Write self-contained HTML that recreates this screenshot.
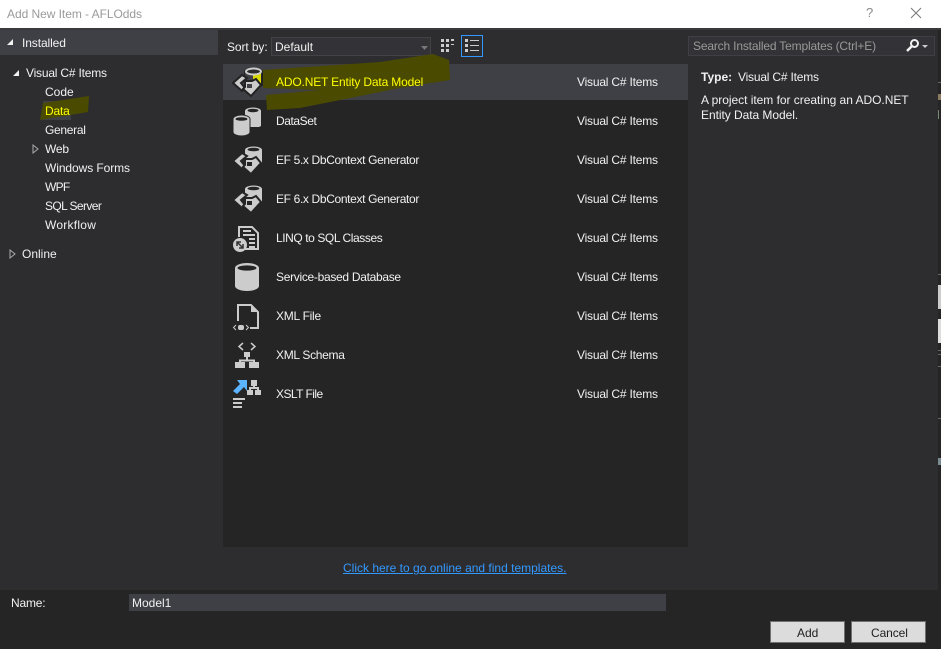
<!DOCTYPE html>
<html><head><meta charset="utf-8"><style>
html,body{margin:0;padding:0;background:#2d2d30}
#r{position:relative;width:941px;height:649px;overflow:hidden;background:#2d2d30;font-family:"Liberation Sans",sans-serif;font-size:12px;color:#f1f1f1}
#r div,#r span.t{position:absolute;white-space:nowrap}
.t{line-height:16px}
.v{letter-spacing:-.2px}
svg{position:absolute;overflow:visible}
</style></head><body><div id="r">
<div style="left:0;top:0;width:941px;height:29px;background:#fff"></div>
<div style="left:0;top:28px;width:941px;height:2px;background:#3a3a3d"></div>
<span class="t" style="left:7px;top:6px;color:#9a9a9a;letter-spacing:-.05px">Add New Item - AFLOdds</span>
<span class="t" style="left:866px;top:5px;color:#8a8a8a;font-size:13px">?</span>
<svg style="left:910px;top:7px" width="12" height="12"><path d="M1 1L11 11M11 1L1 11" stroke="#777" stroke-width="1" fill="none"/></svg>

<div style="left:0;top:30px;width:218px;height:25px;background:#3f3f46"></div>
<svg style="left:6px;top:38px" width="8" height="8"><path d="M7 1V7H1Z" fill="#f1f1f1"/></svg>
<span class="t" style="left:22px;top:35px;letter-spacing:-.1px">Installed</span>
<svg style="left:12px;top:69px" width="8" height="8"><path d="M7 1V7H1Z" fill="#f1f1f1"/></svg>
<span class="t v" style="left:26px;top:65px">Visual C# Items</span>
<span class="t" style="left:45px;top:84px">Code</span>
<div style="left:43px;top:101px;width:28px;height:19px;background:#3f3f46"></div>
<svg style="left:0;top:0" width="100" height="130"><path d="M43 103L89 96L88 112L70 115L40 120Z" fill="#4a4a00"/></svg>
<span class="t" style="left:45px;top:103px;color:#ffff00;letter-spacing:-.2px">Data</span>
<span class="t" style="left:45px;top:122px;letter-spacing:-.3px">General</span>
<svg style="left:32px;top:144px" width="7" height="10"><path d="M1 1V9L6 5Z" fill="none" stroke="#aaa"/></svg>
<span class="t" style="left:45px;top:141px;letter-spacing:-.2px">Web</span>
<span class="t" style="left:45px;top:160px;letter-spacing:-.08px">Windows Forms</span>
<span class="t" style="left:45px;top:179px;letter-spacing:-.7px">WPF</span>
<span class="t" style="left:45px;top:198px;letter-spacing:-.6px">SQL Server</span>
<span class="t" style="left:45px;top:217px;letter-spacing:.25px">Workflow</span>
<svg style="left:9px;top:249px" width="7" height="10"><path d="M1 1V9L6 5Z" fill="none" stroke="#aaa"/></svg>
<span class="t" style="left:22px;top:246px">Online</span>

<span class="t" style="left:227px;top:39px;letter-spacing:-.1px">Sort by:</span>
<div style="left:271px;top:37px;width:158px;height:17px;background:#333337;border:1px solid #434346"></div>
<span class="t" style="left:275px;top:39px">Default</span>
<svg style="left:421px;top:46px" width="8" height="4"><path d="M0 0H7L3.5 4Z" fill="#777"/></svg>
<svg style="left:440px;top:38px" width="15" height="16" fill="#ccc"><rect x="1" y="1" width="3" height="3"/><rect x="6" y="1" width="3" height="3"/><rect x="11" y="1" width="3" height="2"/><rect x="1" y="6" width="3" height="3"/><rect x="6" y="6" width="3" height="3"/><rect x="11" y="6" width="3" height="1"/><rect x="1" y="11" width="3" height="3"/><rect x="6" y="11" width="3" height="3"/></svg>
<div style="left:461px;top:35px;width:20px;height:20px;border:1px solid #3399ff"></div>
<svg style="left:465px;top:39px" width="15" height="14" fill="#ccc"><rect x="0" y="0" width="3" height="3"/><rect x="5" y="1" width="9" height="1"/><rect x="0" y="5" width="3" height="3"/><rect x="5" y="6" width="9" height="1"/><rect x="0" y="10" width="3" height="3"/><rect x="5" y="11" width="9" height="1"/></svg>

<div style="left:223px;top:64px;width:465px;height:483px;background:#252526"></div>
<div style="left:223px;top:64px;width:465px;height:36px;background:#3f3f46"></div>
<svg style="left:0;top:0" width="460" height="120"><path d="M263 70L380 62L433 54L449 60L450 80L400 88L340 100L300 108L267 110L266 95L320 90L263 88Z" fill="#4a4a00"/></svg>

<svg style="left:232px;top:66px" width="32" height="32">
<path d="M13 6A8.500 3.500 0 0 1 30 6V19L24 21H13Z" fill="#d8d800" stroke="#222" stroke-width="2"/>
<path d="M13 6H21V20H13Z" fill="#3f3f46"/>
<ellipse cx="21.500" cy="5.500" rx="7.500" ry="3" fill="#2a2a2a" stroke="#ccc" stroke-width="2"/>
<path d="M10 9L1 17L10 25L13 22L9 17L15 12Z" fill="#ccc" stroke="#222" stroke-width="2"/>
<path d="M12 15H20L24 13L29 19L19 30L11 23L13 21V15Z" fill="#ccc" stroke="#222" stroke-width="2"/>
<path d="M15 18H20V22H15Z" fill="#3f3f46"/>
</svg>
<span class="t" style="left:276px;top:74px;color:#ffff00;letter-spacing:-.16px">ADO.NET Entity Data Model</span>
<span class="t v" style="left:577px;top:74px">Visual C# Items</span>

<svg style="left:232px;top:105px" width="32" height="32" fill="#ccc"><path d="M13 6A8 3.500 0 0 1 29 6V21L27 22H13Z"/><ellipse cx="21" cy="5.500" rx="5.500" ry="1.700" fill="#252526"/><path d="M1 14A8.500 4 0 0 1 18 14V27A8.500 4 0 0 1 1 27Z" stroke="#252526"/><ellipse cx="9.500" cy="14" rx="6" ry="1.800" fill="#252526"/></svg>
<span class="t" style="left:276px;top:113px;letter-spacing:-.43px">DataSet</span>
<span class="t v" style="left:577px;top:113px">Visual C# Items</span>

<svg style="left:232px;top:144px" width="32" height="32">
<path d="M13 6A8.500 3.500 0 0 1 30 6V19L24 21H13Z" fill="#ccc"/>
<ellipse cx="21.500" cy="5.500" rx="6" ry="1.800" fill="#252526"/>
<path d="M10 9L1 17L10 25L13 22L9 17L15 12Z" fill="#ccc" stroke="#252526" stroke-width="2"/>
<path d="M12 15H20L24 13L29 19L19 30L11 23L13 21V15Z" fill="#ccc" stroke="#252526" stroke-width="2"/>
<path d="M15 18H20V22H15Z" fill="#252526"/>
</svg>
<span class="t" style="left:276px;top:152px;letter-spacing:-.35px">EF 5.x DbContext Generator</span>
<span class="t v" style="left:577px;top:152px">Visual C# Items</span>

<svg style="left:232px;top:183px" width="32" height="32">
<path d="M13 6A8.500 3.500 0 0 1 30 6V19L24 21H13Z" fill="#ccc"/>
<ellipse cx="21.500" cy="5.500" rx="6" ry="1.800" fill="#252526"/>
<path d="M10 9L1 17L10 25L13 22L9 17L15 12Z" fill="#ccc" stroke="#252526" stroke-width="2"/>
<path d="M12 15H20L24 13L29 19L19 30L11 23L13 21V15Z" fill="#ccc" stroke="#252526" stroke-width="2"/>
<path d="M15 18H20V22H15Z" fill="#252526"/>
</svg>
<span class="t" style="left:276px;top:191px;letter-spacing:-.35px">EF 6.x DbContext Generator</span>
<span class="t v" style="left:577px;top:191px">Visual C# Items</span>

<svg style="left:232px;top:222px" width="32" height="32">
<path d="M7 15V5H20L26 11V27H13" fill="none" stroke="#ccc" stroke-width="2"/>
<path d="M11 9H19M11 13H23M17 17H23M17 21H23M17 25H23" stroke="#ccc" stroke-width="2"/>
<circle cx="8" cy="23" r="7" fill="#ccc"/>
<path d="M5 20L11 26M5 24V20H9M11 22V26H7" fill="none" stroke="#333" stroke-width="1.500"/>
</svg>
<span class="t" style="left:276px;top:230px;letter-spacing:-.42px">LINQ to SQL Classes</span>
<span class="t v" style="left:577px;top:230px">Visual C# Items</span>

<svg style="left:232px;top:261px" width="32" height="32"><path d="M3 7A12 5 0 0 1 27 7V25A12 5 0 0 1 3 25Z" fill="#ccc"/><ellipse cx="15" cy="7" rx="9.500" ry="2.600" fill="#252526"/></svg>
<span class="t" style="left:276px;top:269px;letter-spacing:-.3px">Service-based Database</span>
<span class="t v" style="left:577px;top:269px">Visual C# Items</span>

<svg style="left:232px;top:303px" width="32" height="30"><path d="M6 18V2H19L26 9V25H18" fill="none" stroke="#ccc" stroke-width="2"/><path d="M19 2V9H26Z" fill="#ccc"/><path d="M4 22L1.500 24.500L4 27M14 22L16.500 24.500L14 27" fill="none" stroke="#ccc"/><rect x="6" y="22" width="6" height="5" rx="2" fill="#ccc"/></svg>
<span class="t" style="left:276px;top:308px;letter-spacing:-.25px">XML File</span>
<span class="t v" style="left:577px;top:308px">Visual C# Items</span>

<svg style="left:232px;top:340px" width="32" height="30" fill="#ccc"><path d="M11 3L7 6.500L11 10M19 3L23 6.500L19 10" fill="none" stroke="#ccc" stroke-width="1.500"/><rect x="12" y="12" width="6" height="5"/><path d="M15 16V21M8 24V20.500H22V24" fill="none" stroke="#ccc" stroke-width="2"/><rect x="3" y="22" width="10" height="6"/><rect x="17" y="22" width="10" height="6"/></svg>
<span class="t" style="left:276px;top:347px;letter-spacing:-.3px">XML Schema</span>
<span class="t v" style="left:577px;top:347px">Visual C# Items</span>

<svg style="left:232px;top:378px" width="34" height="32"><path d="M5 2H15V13L12 9L5 16L1 13L8 6Z" fill="#5cb3ff"/><rect x="19" y="2" width="6" height="6" fill="#ccc"/><path d="M22 7V10M18 14V10H26V14" fill="none" stroke="#ccc" stroke-width="2"/><rect x="15" y="12" width="6" height="5" fill="#ccc"/><rect x="23" y="12" width="6" height="5" fill="#ccc"/><path d="M1 21H13M1 25H10M1 29H10" stroke="#ccc" stroke-width="2"/></svg>
<span class="t" style="left:276px;top:386px;letter-spacing:-.55px">XSLT File</span>
<span class="t v" style="left:577px;top:386px">Visual C# Items</span>

<div style="left:688px;top:36px;width:245px;height:18px;background:#333337;border:1px solid #3f3f46"></div>
<span class="t" style="left:693px;top:38px;color:#999;letter-spacing:-.17px">Search Installed Templates (Ctrl+E)</span>
<svg style="left:906px;top:38px" width="22" height="15"><circle cx="8.500" cy="5.500" r="3.500" fill="none" stroke="#f1f1f1" stroke-width="2"/><path d="M6 8L1 13" stroke="#f1f1f1" stroke-width="2.500"/><path d="M16 7H22L19 10Z" fill="#ccc"/></svg>
<span class="t" style="left:701px;top:69px"><b>Type:</b></span>
<span class="t v" style="left:738px;top:69px">Visual C# Items</span>
<span class="t" style="left:701px;top:92px;letter-spacing:-.03px">A project item for creating an ADO.NET</span>
<span class="t" style="left:701px;top:107px;letter-spacing:-.05px">Entity Data Model.</span>

<span class="t" style="left:343px;top:560px;color:#3399ff;text-decoration:underline">Click here to go online and find templates.</span>

<div style="left:0;top:590px;width:938px;height:59px;background:#252526"></div>
<span class="t" style="left:11px;top:595px;letter-spacing:-.2px">Name:</span>
<div style="left:129px;top:594px;width:537px;height:17px;background:#3f3f46"></div>
<span class="t" style="left:132px;top:595px">Model1</span>
<div style="left:770px;top:621px;width:73px;height:20px;background:#dcdcdc;border:1px solid #707070"></div>
<span class="t" style="left:797px;top:625px;color:#1e1e1e">Add</span>
<div style="left:851px;top:621px;width:73px;height:20px;background:#dcdcdc;border:1px solid #707070"></div>
<span class="t" style="left:871px;top:625px;color:#1e1e1e;letter-spacing:-.1px">Cancel</span>

<div style="left:938px;top:30px;width:3px;height:619px;background:#252526"></div>
<div style="left:938px;top:82px;width:3px;height:1px;background:#666"></div>
<div style="left:938px;top:94px;width:3px;height:6px;background:#8a7a60"></div>
<div style="left:938px;top:110px;width:1px;height:9px;background:#7a8a70"></div>
<div style="left:938px;top:274px;width:3px;height:1px;background:#666"></div>
<div style="left:938px;top:285px;width:3px;height:24px;background:#ccc"></div>
<div style="left:938px;top:319px;width:3px;height:24px;background:#ddd"></div>
<div style="left:938px;top:350px;width:3px;height:1px;background:#666"></div>
<div style="left:938px;top:354px;width:3px;height:1px;background:#666"></div>
<div style="left:938px;top:366px;width:3px;height:1px;background:#666"></div>
<div style="left:938px;top:418px;width:3px;height:1px;background:#666"></div>
<div style="left:938px;top:458px;width:3px;height:7px;background:#7a8a90"></div>
</div></body></html>
